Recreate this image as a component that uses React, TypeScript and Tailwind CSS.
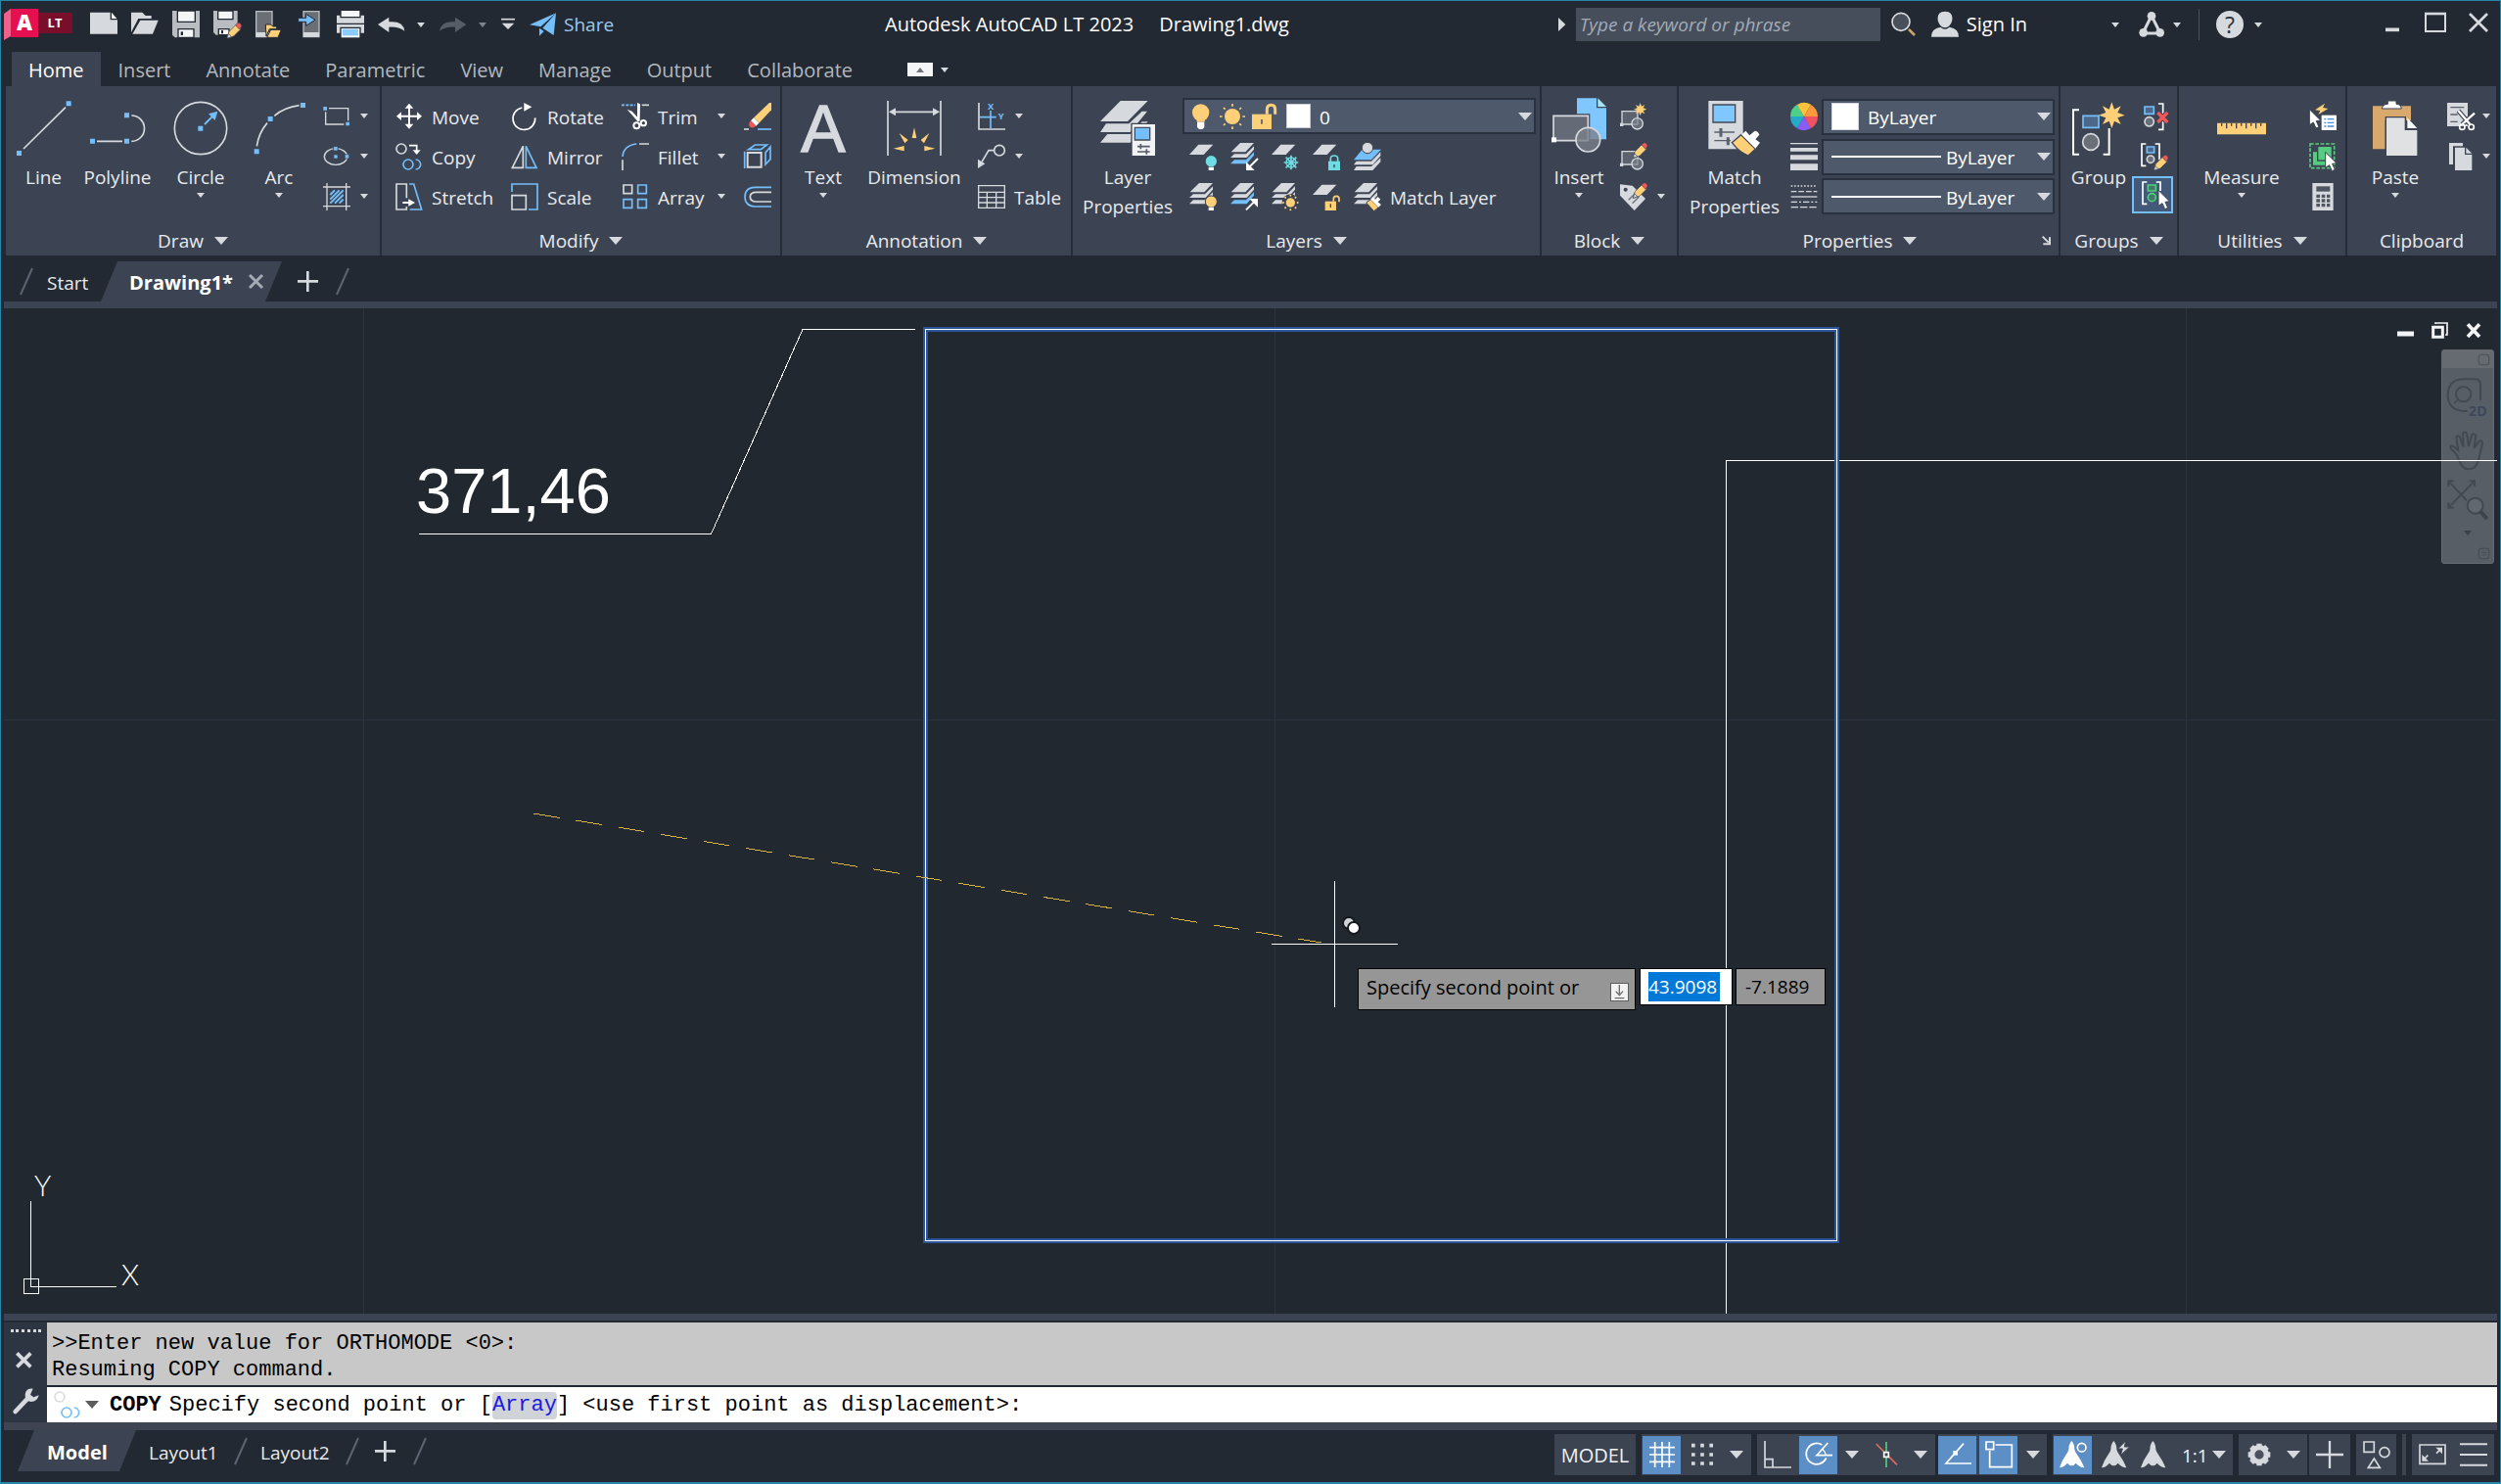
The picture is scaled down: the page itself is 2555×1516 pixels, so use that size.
import type { ReactNode } from 'react'

const LIGHT = '#d6d9dd'
const BLUE = '#74bffb'
const YELLOW = '#ffd077'
const CYAN = '#6fdbe3'
const RED = '#f0565a'
const GREEN = '#55cc80'
const PANEL = '#3c4453'

// Icons are drawn on a grid of three units per pixel
function Icon(props: { w?: number, h?: number, className?: string, children: ReactNode }) {
    const { w = 28, h = w, className = '', children } = props
    return <svg width={w} height={h} viewBox={`0 0 ${w * 3} ${h * 3}`} fill="none" aria-hidden="true" className={`shrink-0 overflow-visible ${className}`}>
        {children}
    </svg>
}

function Caret(props: { big?: boolean, fill?: string, className?: string }) {
    const { big, fill = LIGHT, className = '' } = props
    return <svg width={big ? 14 : 8} height={big ? 8 : 5} viewBox="0 0 8 5" preserveAspectRatio="none" aria-hidden="true" className={`shrink-0 ${className}`}>
        <path d="M0 0H8L4 5Z" fill={fill} />
    </svg>
}

function Slash() {
    return <svg width="14" height="29" viewBox="0 0 14 29" className="shrink-0" aria-hidden="true">
        <path d="M13 1L1 28" stroke="#5b6470" strokeWidth="2" />
    </svg>
}

function Plus() {
    return <Icon w={21}><path d="M31 0V63M0 31H63" stroke={LIGHT} strokeWidth="8" /></Icon>
}

/* ---------- shared bits of drawings ---------- */

function Pencil(props: { x: number, y: number }) {
    return <g transform={`translate(${props.x} ${props.y})`} stroke={PANEL} strokeWidth="2">
        <path d="M0 44L6 24L28 2L42 16L20 38Z" fill={YELLOW} />
        <path d="M26 4L32 -2Q36 -5 41 0Q47 6 43 10L38 17Z" fill={RED} />
        <path d="M0 44L4 30L14 40Z" fill={LIGHT} />
    </g>
}

function Pointer(props: { x: number, y: number }) {
    return <path transform={`translate(${props.x} ${props.y})`} d="M0 0L34 34L21 36L29 54L20 58L12 40L0 48Z" fill="#fff" stroke={PANEL} strokeWidth="3" />
}

function Burst(props: { x: number, y: number, s: number }) {
    return <path transform={`translate(${props.x} ${props.y}) scale(${props.s})`} fill={YELLOW}
        d="M0 -20L4 -9L14 -14L9 -4L20 0L9 4L14 14L4 9L0 20L-4 9L-14 14L-9 4L-20 0L-9 -4L-14 -14L-4 -9Z" />
}

function Sheet() {
    return <path d="M28 5H73L44 36H0Z" fill={LIGHT} />
}

function Stack(props: { last?: string }) {
    return <>
        <path d="M30 0H72L46 28H2Z" fill={LIGHT} />
        <path d="M12 34H48L72 10V20L50 45H0Z" fill={LIGHT} />
        <path d="M12 52H48L72 28V38L50 64H0Z" fill={props.last || LIGHT} />
    </>
}

function Sun(props: { x: number, y: number, r: number }) {
    const { x, y, r } = props
    return <g>
        <circle cx={x} cy={y} r={r} fill={YELLOW} />
        {[0, 45, 90, 135, 180, 225, 270, 315].map(a => <circle key={a} cx={x} cy={y - r - 8} r="3" fill={YELLOW} transform={`rotate(${a} ${x} ${y})`} />)}
    </g>
}

function BlockShape() {
    return <>
        <path d="M6 26H54V66H6Z" fill="#5c626e" stroke={LIGHT} strokeWidth="4" />
        <path d="M0 62h10v10H0Z" fill={LIGHT} />
        <circle cx="53" cy="64" r="17" fill="#7a808a" fillOpacity="0.7" stroke={LIGHT} strokeWidth="4" />
    </>
}

/* ---------- ribbon controls ---------- */

function BigButton(props: { label: string[], width: string, caret?: boolean, children: ReactNode }) {
    const { label, width, caret, children } = props
    return <button type="button" className={`${width} flex shrink-0 flex-col items-center pt-[5px]`}>
        <span className="flex h-14 items-center justify-center">{children}</span>
        <span className="mt-[7px] leading-[30px]">
            {label.map(line => <span key={line} className="block">{line}</span>)}
        </span>
        {caret && <Caret className="mt-px" />}
    </button>
}

function Row(props: { label?: string, name?: string, caret?: boolean, caretEnd?: boolean, gap?: string, children: ReactNode }) {
    const { label, name, caret, caretEnd, gap = 'ml-[10px]', children } = props
    return <button type="button" aria-label={label || name} className="flex h-[41px] items-center whitespace-nowrap">
        {children}
        {label && <span className="ml-[9px] pt-[2px]">{label}</span>}
        {caret && <Caret className={gap} />}
        {caretEnd && <Caret className="mr-[19px] ml-auto" />}
    </button>
}

function Panel(props: { title: string, width: string, noCaret?: boolean, launcher?: boolean, children: ReactNode }) {
    const { title, width, noCaret, launcher, children } = props
    return <section aria-label={title} className={`${width} relative flex flex-col border-r-2 border-[#262d38] pt-[10px] last:border-r-0`}>
        <div className="flex h-[123px]">{children}</div>
        <div className={`flex h-10 items-center justify-center gap-[11px] pt-[10px] ${launcher ? 'pr-[18px]' : ''}`}>
            <span>{title}</span>
            {!noCaret && <Caret big />}
        </div>
        {launcher && <button type="button" aria-label="Properties palette" className="absolute right-2 bottom-[11px]">
            <Icon w={9}><path d="M2 2L20 20M24 4V25H4" stroke={LIGHT} strokeWidth="6" /></Icon>
        </button>}
    </section>
}

function Select(props: { name: string, value: string, pad: string, children: ReactNode }) {
    const { name, value, pad, children } = props
    return <div className="relative h-[37px] w-full">
        <select aria-label={name} defaultValue={value} className={`h-full w-full appearance-none border-2 border-[#2a313e] bg-[#4e5a6c] pt-[2px] ${pad} text-white`}>
            <option>{value}</option>
        </select>
        <div className="pointer-events-none absolute inset-0 flex items-center">
            {children}
            <Caret big className="mr-[4px] ml-auto" />
        </div>
    </div>
}

/* ---------- title bar ---------- */

function QuickAccess() {
    return <div className="flex items-center gap-[14px]">
        <button type="button" aria-label="New"><Icon>
            <path d="M0 5H62V28H84V71H0Z" fill={LIGHT} />
            <path d="M66 5L82 24H66Z" fill="#fff" />
        </Icon></button>
        <button type="button" aria-label="Open"><Icon>
            <path d="M0 5H34L44 15H62V24H22L0 66Z" fill={LIGHT} />
            <path d="M28 29H83L66 71H4Z" fill={LIGHT} />
        </Icon></button>
        <button type="button" aria-label="Save"><Icon>
            <path d="M0 0H84V82H8L0 74Z" fill="#b9bdc2" />
            <path d="M16 0H70V34H16Z" fill="#f4f6f8" stroke="#222933" strokeWidth="4" />
            <path d="M18 56H66V82H18Z" fill="#f4f6f8" stroke="#222933" strokeWidth="4" />
            <path d="M26 64h7v11h-7Z" fill="#222933" />
        </Icon></button>
        <button type="button" aria-label="Save As"><Icon>
            <path d="M0 0H74V52L48 74H8L0 66Z" fill="#b9bdc2" />
            <path d="M14 0H60V26H14Z" fill="#f4f6f8" stroke="#222933" strokeWidth="4" />
            <path d="M16 56H48V74H16Z" fill="#f4f6f8" stroke="#222933" strokeWidth="4" />
            <path d="M24 60h6v10h-6Z" fill="#222933" />
            <Pencil x={42} y={40} />
        </Icon></button>
        <button type="button" aria-label="Open from mobile"><Icon>
            <path d="M5 2H54V80H5Z" fill="#6a6e75" stroke="#b9bdc2" strokeWidth="4" />
            <path d="M5 66H54V80H5Z" fill={LIGHT} />
            <path d="M34 42H50L56 48H68V56H46L36 78Z" fill={YELLOW} stroke="#222933" strokeWidth="3" />
            <path d="M50 58H82L72 82H38Z" fill={YELLOW} stroke="#222933" strokeWidth="3" />
        </Icon></button>
        <button type="button" aria-label="Save to mobile"><Icon>
            <path d="M24 2H72V80H24Z" fill="#6a6e75" stroke="#b9bdc2" strokeWidth="4" />
            <path d="M24 66H72V80H24Z" fill={LIGHT} />
            <path d="M8 22H32V10L60 28L32 46V34H8Z" fill={BLUE} stroke="#222933" strokeWidth="3" />
        </Icon></button>
        <button type="button" aria-label="Plot"><Icon>
            <path d="M14 0H70V18H14Z" fill="#f4f6f8" />
            <path d="M0 14H10V22H74V14H84V38H0Z" fill={LIGHT} />
            <path d="M0 42H84V68H74V50H10V68H0Z" fill={LIGHT} />
            <path d="M14 54H70V82H14Z" fill="#f4f6f8" />
            <path d="M18 56H66V76H18Z" fill="#8ccbff" />
        </Icon></button>
        <div className="flex items-center">
            <button type="button" aria-label="Undo"><Icon>
                <path d="M0 42L34 20V34Q78 30 82 62Q62 48 34 50V66Z" fill={LIGHT} />
            </Icon></button>
            <Caret className="ml-3" />
            <button type="button" aria-label="Redo" className="ml-[15px]"><Icon>
                <path d="M82 42L48 20V34Q6 30 0 62Q20 48 48 50V66Z" fill="#565d67" />
            </Icon></button>
            <Caret className="ml-3" fill="#7d838c" />
            <button type="button" aria-label="Customize Quick Access Toolbar" className="ml-[15px]">
                <Icon w={14}><path d="M0 5H42" stroke={LIGHT} strokeWidth="5" /><path d="M2 17H40L21 36Z" fill={LIGHT} /></Icon>
            </button>
            <button type="button" className="ml-[15px] flex items-center text-[19px] text-[#9cc9ee]">
                <Icon w={27}>
                    <path d="M0 40L81 4L34 46Z" fill={BLUE} />
                    <path d="M81 4L40 50L74 72Z" fill={BLUE} />
                    <path d="M30 50V74L44 60Z" fill={BLUE} />
                </Icon>
                <span className="ml-2">Share</span>
            </button>
        </div>
    </div>
}

function TitleBar() {
    return <header className="flex h-[52px] items-start text-[20px]">
        <div className="flex h-[48px] w-[903px] shrink-0 items-center pl-[3px]">
            <svg width="70" height="32" viewBox="0 0 70 32" className="mr-[18px] shrink-0 overflow-visible" aria-label="AutoCAD LT">
                <path d="M0 5L7 0V28L0 32Z" fill="#f0608a" />
                <path d="M7 0H35V29H7Z" fill="#e51050" />
                <path d="M35 4H70V25H35Z" fill="#790e2b" />
                <text x="21" y="22" textAnchor="middle" fontSize="22" fontWeight="800" fill="#fff">A</text>
                <text x="52" y="19" textAnchor="middle" fontSize="13" fontWeight="700" fill="#fff">LT</text>
            </svg>
            <QuickAccess />
        </div>
        <div className="flex h-[48px] shrink-0 items-center gap-[26px] text-white">
            <span>Autodesk AutoCAD LT 2023</span>
            <span>Drawing1.dwg</span>
        </div>
        <div className="flex h-[48px] flex-1 items-center justify-end">
            <Icon w={8} h={14}><path d="M0 0L22 21L0 42Z" fill={LIGHT} /></Icon>
            <input type="text" aria-label="Search help" placeholder="Type a keyword or phrase" className="ml-[10px] h-[34px] w-[311px] bg-[#464e5c] pl-1 text-[19px] italic placeholder:text-[#a3abb8]" />
            <button type="button" aria-label="Search" className="ml-[11px]"><Icon w={26}>
                <path d="M54 54L72 72" stroke="#c9a26c" strokeWidth="8" />
                <circle cx="30" cy="31" r="27" fill="#4a505a" stroke={LIGHT} strokeWidth="5" />
            </Icon></button>
            <button type="button" className="ml-[15px] flex items-center text-white">
                <Icon>
                    <path d="M42 2C58 2 66 12 64 28C62 42 52 52 42 52C32 52 22 42 20 28C18 12 26 2 42 2Z" fill={LIGHT} />
                    <path d="M0 80Q0 54 28 50Q42 62 56 50Q84 54 84 80Z" fill={LIGHT} />
                </Icon>
                <span className="ml-2">Sign In</span>
            </button>
            <Caret className="ml-[86px]" />
            <button type="button" aria-label="Autodesk App Store" className="ml-5"><Icon w={26}>
                <path d="M39 12L12 66H66Z" stroke={LIGHT} strokeWidth="9" />
                <circle cx="39" cy="13" r="13" fill={LIGHT} />
                <circle cx="14" cy="64" r="13" fill={LIGHT} />
                <circle cx="65" cy="64" r="13" fill={LIGHT} />
            </Icon></button>
            <Caret className="ml-[9px]" />
            <span className="ml-[18px] h-8 w-px bg-[#4a525e]" />
            <button type="button" aria-label="Help" className="ml-[17px] flex size-7 items-center justify-center rounded-full bg-[#d6d9dd] text-[23px] leading-none text-[#2b323c]">?</button>
            <Caret className="ml-[11px]" />
            <button type="button" aria-label="Minimize" className="ml-[126px]"><Icon w={14}><path d="M0 37H42" stroke={LIGHT} strokeWidth="11" /></Icon></button>
            <button type="button" aria-label="Maximize" className="ml-[26px] -mt-1"><Icon w={22}><path d="M3 6H63V60H3Z" stroke={LIGHT} strokeWidth="6" /><path d="M0 6H66" stroke={LIGHT} strokeWidth="8" /></Icon></button>
            <button type="button" aria-label="Close" className="mr-3 ml-[23px] -mt-1"><Icon w={20}><path d="M3 3L57 57M57 3L3 57" stroke={LIGHT} strokeWidth="8" /></Icon></button>
        </div>
    </header>
}

function RibbonTabs() {
    const tabs = ['Insert', 'Annotate', 'Parametric', 'View', 'Manage', 'Output', 'Collaborate']
    return <nav className="flex h-[35px] items-stretch pl-[11px] text-[20px] text-[#b3b8be]">
        <button type="button" className="bg-[#3c4453] px-[17px] pt-[2px] text-white">Home</button>
        {tabs.map(tab => <button type="button" key={tab} className="px-[18px] pt-[2px]">{tab}</button>)}
        <button type="button" aria-label="Minimize ribbon" className="ml-[38px] flex items-center pt-px">
            <span className="flex h-[14px] w-[26px] items-center justify-center bg-[#f4f5f7]">
                <Caret fill="#6f747b" className="rotate-180" />
            </span>
            <Caret className="ml-2" />
        </button>
    </nav>
}

/* ---------- ribbon panels ---------- */

function DrawPanel() {
    return <Panel title="Draw" width="w-[384px]">
        <BigButton label={['Line']} width="w-[77px]">
            <Icon w={56}>
                <path d="M21 147L150 20" stroke={LIGHT} strokeWidth="5" />
                <path d="M0 153h15v15H0ZM152 1h15v15h-15Z" fill={BLUE} />
            </Icon>
        </BigButton>
        <BigButton label={['Polyline']} width="w-[74px]">
            <Icon w={56}>
                <path d="M21 124H99M127 45A39 39 0 0 1 127 124" stroke={LIGHT} strokeWidth="5" />
                <path d="M0 116h15v15H0ZM105 116h15v15h-15ZM105 37h15v15h-15Z" fill={BLUE} />
            </Icon>
        </BigButton>
        <BigButton label={['Circle']} width="w-24" caret>
            <Icon w={56}>
                <circle cx="84" cy="84" r="80" stroke={LIGHT} strokeWidth="5" />
                <path d="M96 72L124 44" stroke={BLUE} strokeWidth="6" />
                <path d="M76 77h15v15H76ZM136 32L108 40L128 60Z" fill={BLUE} />
            </Icon>
        </BigButton>
        <BigButton label={['Arc']} width="w-16" caret>
            <Icon w={56}>
                <path d="M16 139Q22 98 48 68M70 46Q100 20 146 14" stroke={LIGHT} strokeWidth="5" />
                <path d="M8 148h15v15H8ZM50 48h15v15H50ZM150 6h15v15h-15Z" fill={BLUE} />
            </Icon>
        </BigButton>
        <div className="ml-[13px]">
            <Row name="Rectangle" caret><Icon>
                <path d="M18 17H77V55M8 28V66H64" stroke={LIGHT} strokeWidth="4" />
                <path d="M1 12h11v11H1ZM70 59h11v11H70Z" fill={BLUE} />
            </Icon></Row>
            <Row name="Ellipse" caret><Icon>
                <ellipse cx="39" cy="42" rx="35" ry="25" stroke={LIGHT} strokeWidth="4" />
                <path d="M32 11h13v13H32ZM67 35h13v13H67Z" fill={BLUE} stroke={PANEL} strokeWidth="2" />
                <path d="M34 37h10v10H34Z" fill={BLUE} />
            </Icon></Row>
            <Row name="Hatch" caret><Icon>
                <path d="M0 12H84M0 71H84M12 0V84M71 0V84" stroke={LIGHT} strokeWidth="4" />
                <path d="M22 36L36 22M22 50L50 22M22 62L62 22M36 62L62 36M50 62L62 50" stroke={BLUE} strokeWidth="6" />
            </Icon></Row>
        </div>
    </Panel>
}

function ModifyPanel() {
    return <Panel title="Modify" width="w-[409px]">
        <div className="ml-[14px] flex w-[118px] flex-col">
            <Row label="Move"><Icon>
                <path d="M42 12V70M14 41H70" stroke="#fff" strokeWidth="6" />
                <path d="M42 2L55 17H29ZM42 80L55 65H29ZM3 41L18 28V54ZM81 41L66 28V54Z" fill="#fff" />
            </Icon></Row>
            <Row label="Copy"><Icon>
                <circle cx="18" cy="18" r="15" stroke={LIGHT} strokeWidth="5" />
                <path d="M42 8H65V24" stroke="#fff" strokeWidth="5" />
                <path d="M53 22H77L65 36Z" fill="#fff" />
                <circle cx="39" cy="66" r="15" stroke={BLUE} strokeWidth="5" />
                <path d="M62 51A15 15 0 1 1 62 81" stroke={BLUE} strokeWidth="5" />
            </Icon></Row>
            <Row label="Stretch"><Icon>
                <path d="M34 46V3H3V81H34V72" stroke={LIGHT} strokeWidth="5" />
                <path d="M22 60H44" stroke="#fff" strokeWidth="6" />
                <path d="M40 49L60 60L40 71Z" fill="#fff" />
                <path d="M42 3H56L80 81H44" stroke={BLUE} strokeWidth="5" />
            </Icon></Row>
        </div>
        <div className="flex w-[113px] flex-col">
            <Row label="Rotate"><Icon>
                <path d="M34 15A34 34 0 1 0 74 46" stroke="#fff" strokeWidth="5" />
                <path d="M40 0L64 13L40 26Z" fill="#fff" />
            </Icon></Row>
            <Row label="Mirror"><Icon>
                <path d="M37 10V76H4Z" stroke={LIGHT} strokeWidth="5" />
                <path d="M46 10V76H78Z" stroke={BLUE} strokeWidth="5" />
            </Icon></Row>
            <Row label="Scale"><Icon>
                <path d="M3 27V3H81V81H54" stroke={BLUE} strokeWidth="5" />
                <path d="M3 38H46V81H3Z" stroke={LIGHT} strokeWidth="5" />
            </Icon></Row>
        </div>
        <div className="flex w-[125px] flex-col">
            <Row label="Trim" caretEnd><Icon>
                <path d="M0 7H42" stroke={BLUE} strokeWidth="5" strokeDasharray="9 4" />
                <path d="M62 7H84" stroke={LIGHT} strokeWidth="5" />
                <path d="M48 0L57 4L56 50L48 52ZM17 20L32 26L58 54L50 58Z" fill="#fff" />
                <circle cx="46" cy="70" r="9" stroke="#fff" strokeWidth="6" />
                <circle cx="67" cy="62" r="8" stroke="#fff" strokeWidth="6" />
            </Icon></Row>
            <Row label="Fillet" caretEnd><Icon>
                <path d="M3 42Q6 8 46 3" stroke={BLUE} strokeWidth="5" />
                <path d="M54 3H84M3 52V84" stroke={LIGHT} strokeWidth="5" />
            </Icon></Row>
            <Row label="Array" caretEnd><Icon>
                <path d="M6 6H32V32H6Z" stroke={LIGHT} strokeWidth="5" />
                <path d="M50 6H76V32H50ZM6 50H32V76H6ZM50 50H76V76H50Z" stroke={BLUE} strokeWidth="5" />
            </Icon></Row>
        </div>
        <div>
            <Row name="Erase"><Icon>
                <path d="M78 0H84V22L46 62L30 46Z" fill={YELLOW} />
                <path d="M30 46L46 62L37 71L21 55Z" fill="#fff" />
                <path d="M21 55L37 71Q28 80 19 74Q11 66 21 55Z" fill={RED} />
                <path d="M0 81H15" stroke={LIGHT} strokeWidth="5" />
                <path d="M42 81H84" stroke={BLUE} strokeWidth="5" />
            </Icon></Row>
            <Row name="Explode"><Icon>
                <path d="M11 30H53V74H11Z" stroke={LIGHT} strokeWidth="6" />
                <path d="M14 20L34 6H70L52 20ZM66 30L81 12V50L66 66ZM2 26V78" stroke={BLUE} strokeWidth="5" />
            </Icon></Row>
            <Row name="Offset"><Icon>
                <path d="M84 13H34Q3 14 3 42Q3 70 34 72H84" stroke={BLUE} strokeWidth="5" />
                <path d="M84 28H38Q19 28 19 42Q19 57 38 57H84" stroke={LIGHT} strokeWidth="5" />
            </Icon></Row>
        </div>
    </Panel>
}

function AnnotationPanel() {
    return <Panel title="Annotation" width="w-[297px]">
        <BigButton label={['Text']} width="w-[84px]" caret>
            <Icon w={56}>
                <text x="84" y="157" fontSize="204" textAnchor="middle" fill={LIGHT} stroke={LIGHT} strokeWidth="4" className="font-['Liberation_Sans']">A</text>
            </Icon>
        </BigButton>
        <BigButton label={['Dimension']} width="w-[102px]">
            <Icon w={56}>
                <path d="M3 0V168M165 0V168M20 34H148" stroke={LIGHT} strokeWidth="5" />
                <path d="M6 34L27 22V46ZM162 34L141 22V46Z" fill={LIGHT} />
                <path d="M84 82L91 114H77ZM38 99L65 120L55 130ZM130 99L114 130L104 120ZM20 146L53 138V154ZM148 146L115 138V154Z" fill={YELLOW} />
            </Icon>
        </BigButton>
        <div className="ml-[14px]">
            <Row name="Linear" caret><Icon>
                <path d="M3 0V81H84" stroke={LIGHT} strokeWidth="5" />
                <path d="M6 44H56M39 24V78" stroke={BLUE} strokeWidth="5" />
                <text x="39" y="20" fontSize="28" fontWeight="700" textAnchor="middle" fill={BLUE}>X</text>
                <text x="71" y="50" fontSize="28" fontWeight="700" textAnchor="middle" fill={BLUE}>Y</text>
            </Icon></Row>
            <Row name="Leader" caret><Icon>
                <circle cx="66" cy="23" r="16" stroke={LIGHT} strokeWidth="5" />
                <path d="M48 23H33L12 58" stroke={LIGHT} strokeWidth="5" />
                <path d="M0 50L22 64L0 78Z" fill={LIGHT} />
            </Icon></Row>
            <Row label="Table"><Icon>
                <path d="M2 8H82V76H2ZM2 28H82M2 44H82M2 60H82M28 28V76M56 28V76" stroke={LIGHT} strokeWidth="4" />
            </Icon></Row>
        </div>
    </Panel>
}

function LayersPanel() {
    return <Panel title="Layers" width="w-[479px]">
        <BigButton label={['Layer', 'Properties']} width="w-28">
            <Icon w={56}>
                <path d="M62 0H146L84 63H0Z" fill={LIGHT} />
                <path d="M18 70H88L128 32H144L92 96H0Z" fill={LIGHT} />
                <path d="M22 102H92L128 64H146L92 128H0Z" fill={LIGHT} />
                <path d="M96 70H170V170H96Z" fill="#f2f3f5" stroke={PANEL} strokeWidth="4" />
                <path d="M106 82H152V120H106Z" fill={BLUE} stroke="#444c58" strokeWidth="4" />
                <path d="M114 140H152M124 132V148M114 156H152M142 148V164" stroke="#555c66" strokeWidth="5" />
            </Icon>
        </BigButton>
        <div className="mr-1 flex-1">
            <div className="flex h-[41px] items-center">
                <Select name="Layer" value="0" pad="pl-[138px]">
                    <Icon w={26} className="ml-[5px]">
                        <circle cx="41" cy="27" r="26" fill={YELLOW} />
                        <path d="M29 46H53V56H29Z" fill={YELLOW} />
                        <path d="M30 56H52V72L46 78H36L30 72Z" fill="#fff" />
                    </Icon>
                    <Icon w={26} className="ml-[7px]">
                        <circle cx="39" cy="39" r="24" fill={YELLOW} />
                        <path d="M39 0V8M39 70V78M0 39H8M70 39H78M12 12L17 17M61 61L66 66M66 12L61 17M12 66L17 61" stroke={YELLOW} strokeWidth="5" />
                    </Icon>
                    <Icon w={26} className="ml-[7px]">
                        <path d="M0 32H60V78H0Z" fill={YELLOW} />
                        <path d="M46 32V18Q46 4 59 4Q71 4 71 18V32" stroke={YELLOW} strokeWidth="9" />
                        <path d="M30 48V62" stroke="#4e5a6c" strokeWidth="5" />
                    </Icon>
                    <span className="ml-[9px] size-[25px] border border-[#c8ccd2] bg-white" />
                </Select>
            </div>
            <div className="flex gap-[14px] pl-[7px]">
                <Row name="Off"><Icon>
                    <Sheet /><circle cx="67" cy="56" r="17" fill={CYAN} /><path d="M59 74H75V84H59Z" fill="#fff" />
                </Icon></Row>
                <Row name="Isolate"><Icon>
                    <Stack last={BLUE} /><path d="M84 50L58 76" stroke={PANEL} strokeWidth="14" />
                    <path d="M84 48L58 74" stroke="#fff" strokeWidth="6" /><path d="M48 84V58L74 84Z" fill="#fff" />
                </Icon></Row>
                <Row name="Freeze"><Icon>
                    <Sheet />
                    <path d="M60 38V82M38 60H82M44 44L76 76M76 44L44 76" stroke={CYAN} strokeWidth="5" />
                    <circle cx="60" cy="60" r="15" stroke={CYAN} strokeWidth="4" />
                </Icon></Row>
                <Row name="Lock"><Icon>
                    <Sheet /><path d="M48 56H84V84H48Z" fill={CYAN} />
                    <path d="M55 58V48Q55 39 66 39Q77 39 77 48V58" stroke={CYAN} strokeWidth="5" /><path d="M66 66V76" stroke={PANEL} strokeWidth="4" />
                </Icon></Row>
                <Row name="Make Current"><Icon>
                    <path d="M26 20H84L54 52H0Z" fill={BLUE} />
                    <circle cx="42" cy="15" r="17" fill={LIGHT} stroke={PANEL} strokeWidth="3" />
                    <path d="M8 56H54L82 28V40L58 67H0ZM8 72H54L82 46V58L58 84H0Z" fill={LIGHT} />
                </Icon></Row>
            </div>
            <div className="flex gap-[14px] pl-[7px]">
                <Row name="Turn All On"><Icon>
                    <Stack /><circle cx="67" cy="57" r="18" fill={YELLOW} stroke={PANEL} strokeWidth="3" /><path d="M59 74H75V84H59Z" fill="#fff" />
                </Icon></Row>
                <Row name="Unisolate"><Icon>
                    <Stack last={BLUE} /><path d="M48 84L74 58" stroke={PANEL} strokeWidth="14" />
                    <path d="M48 82L72 58" stroke="#fff" strokeWidth="6" /><path d="M84 48V74L58 48Z" fill="#fff" />
                </Icon></Row>
                <Row name="Thaw All"><Icon>
                    <Stack /><circle cx="58" cy="60" r="26" fill={PANEL} /><Sun x={58} y={60} r={14} />
                </Icon></Row>
                <Row name="Unlock"><Icon>
                    <Sheet /><path d="M38 56H72V84H38Z" fill={YELLOW} />
                    <path d="M64 56V48Q64 40 73 40Q81 40 81 48V58" stroke={YELLOW} strokeWidth="5" /><path d="M55 64V75" stroke={PANEL} strokeWidth="4" />
                </Icon></Row>
                <Row label="Match Layer"><Icon>
                    <Stack />
                    <path d="M38 60L52 50L76 74L62 86Z" fill={YELLOW} stroke={PANEL} strokeWidth="3" />
                    <path d="M52 50L60 44L66 50L74 42L82 50L74 58L84 66L76 74Z" fill="#fff" />
                </Icon></Row>
            </div>
        </div>
    </Panel>
}

function BlockPanel() {
    return <Panel title="Block" width="w-[140px]">
        <BigButton label={['Insert']} width="w-[76px]" caret>
            <Icon w={56}>
                <path d="M78 -8H138V22H168V118H78Z" fill="#80c6ff" />
                <path d="M142 -8L168 18H142Z" fill="#a6e6f4" />
                <path d="M6 46H112V122H6Z" fill="#646a76" stroke={PANEL} strokeWidth="12" />
                <path d="M6 46H112V122H6Z" fill="#646a76" stroke={LIGHT} strokeWidth="5" />
                <path d="M0 112h15v15H0Z" fill="#fff" />
                <circle cx="112" cy="119" r="37" fill="#7b818b" fillOpacity="0.8" stroke={LIGHT} strokeWidth="5" />
            </Icon>
        </BigButton>
        <div className="ml-1">
            <Row name="Create Block"><Icon><BlockShape /><Burst x={62} y={20} s={1} /></Icon></Row>
            <Row name="Block Editor"><Icon><BlockShape /><Pencil x={40} y={2} /></Icon></Row>
            <Row name="Edit Attributes" caret><Icon>
                <path d="M0 4L38 8L78 48L44 84L0 38Z" fill={LIGHT} />
                <circle cx="17" cy="20" r="6" fill={PANEL} />
                <path d="M26 52L46 32M38 62L58 42" stroke="#6b717b" strokeWidth="4" />
                <Pencil x={40} y={2} />
            </Icon></Row>
        </div>
    </Panel>
}

function ColorWheel() {
    const colors = ['#ff9a3c', '#f0525f', '#8a5cf5', '#27a9c9', '#4fd08a', '#ffc23d']
    return <Icon>
        {colors.map((color, index) => <path key={color} d="M42 42L42 0A42 42 0 0 1 78.4 21Z" fill={color} transform={`rotate(${30 + index * 60} 42 42)`} />)}
    </Icon>
}

function PropertiesPanel() {
    return <Panel title="Properties" width="w-[390px]" launcher>
        <BigButton label={['Match', 'Properties']} width="w-[114px]">
            <Icon w={56}>
                <path d="M4 0H110V148H4Z" fill={LIGHT} />
                <path d="M18 12H86V66H18Z" fill="#80c6ff" stroke="#3f4855" strokeWidth="4" />
                <path d="M22 96H84M22 122H72" stroke="#5a616b" strokeWidth="4" />
                <path d="M42 84V110M64 112V136" stroke="#5a616b" strokeWidth="9" />
                <path d="M76 128L104 104L148 148L126 168Q96 156 76 128Z" fill={YELLOW} stroke={PANEL} strokeWidth="4" />
                <path d="M106 104L118 92L130 106L146 92Q156 92 160 104L148 118L162 128L148 146Z" fill="#fff" />
            </Icon>
        </BigButton>
        <div className="flex flex-col">
            <div className="flex h-[41px] items-center"><ColorWheel /></div>
            <div className="flex h-[41px] items-center"><Icon>
                <path d="M0 0H84V4H0ZM0 15H84V26H0ZM0 37H84V52H0ZM0 64H84V84H0Z" fill={LIGHT} />
            </Icon></div>
            <div className="flex h-[41px] items-center"><Icon>
                <g stroke={LIGHT} strokeWidth="4">
                    <path d="M2 9H82" strokeDasharray="5 5" />
                    <path d="M2 26H82" strokeDasharray="17 6" />
                    <path d="M2 42H82" />
                    <path d="M2 58H82" strokeDasharray="19 6 6 6" />
                    <path d="M2 74H82" strokeDasharray="22 6" />
                </g>
            </Icon></div>
        </div>
        <div className="mr-1 ml-1 flex flex-1 flex-col pt-px">
            <div className="flex h-[41px] items-center">
                <Select name="Object color" value="ByLayer" pad="pl-[45px]">
                    <span className="ml-[10px] size-7 border border-[#d4d7dc] bg-white" />
                </Select>
            </div>
            <div className="flex h-[41px] items-center">
                <Select name="Lineweight" value="ByLayer" pad="pl-[125px]">
                    <span className="ml-[10px] h-[2px] w-28 bg-white" />
                </Select>
            </div>
            <div className="flex h-[41px] items-center">
                <Select name="Linetype" value="ByLayer" pad="pl-[125px]">
                    <span className="ml-[10px] h-[2px] w-28 bg-white" />
                </Select>
            </div>
        </div>
    </Panel>
}

function GroupsPanel() {
    return <Panel title="Groups" width="w-[121px]">
        <BigButton label={['Group']} width="ml-[5px] w-[68px]">
            <Icon w={56}>
                <path d="M24 28H6V164H24M98 164H116V84" stroke="#fff" strokeWidth="6" />
                <path d="M36 46H84V82H36Z" fill="#4d6788" stroke={BLUE} strokeWidth="5" />
                <circle cx="60" cy="126" r="25" fill="#6a6f78" stroke={LIGHT} strokeWidth="5" />
                <circle cx="124" cy="44" r="30" fill={PANEL} />
                <Burst x={124} y={44} s={2} />
            </Icon>
        </BigButton>
        <div className="flex flex-col">
            <button type="button" aria-label="Ungroup" className="flex h-[41px] w-[42px] items-center justify-center pl-[3px]"><Icon>
                <path d="M54 3H68V82H54" stroke="#fff" strokeWidth="5" />
                <path d="M12 12H40V34H12Z" fill="#4d6788" stroke={BLUE} strokeWidth="5" />
                <circle cx="26" cy="58" r="14" fill="#6a6f78" stroke={LIGHT} strokeWidth="5" />
                <path d="M52 30L82 60M82 30L52 60" stroke={PANEL} strokeWidth="16" />
                <path d="M52 30L82 60M82 30L52 60" stroke={RED} strokeWidth="10" />
            </Icon></button>
            <button type="button" aria-label="Group Edit" className="flex h-[41px] w-[42px] items-center justify-center pl-[3px]"><Icon>
                <path d="M16 3H3V70H16M44 3H57V52" stroke="#fff" strokeWidth="5" />
                <path d="M19 12H41V30H19Z" fill="#4d6788" stroke={BLUE} strokeWidth="5" />
                <circle cx="30" cy="50" r="11" fill="#6a6f78" stroke={LIGHT} strokeWidth="5" />
                <Pencil x={40} y={40} />
            </Icon></button>
            <button type="button" aria-label="Group Selection" className="flex h-[38px] w-[42px] items-center justify-center border-2 border-[#74bffb] bg-[#43597a] pl-[3px]"><Icon>
                <path d="M19 3H6V70H19M47 3H60V30" stroke="#fff" strokeWidth="5" />
                <path d="M22 12H46V30H22Z" fill="#3f7a68" stroke={GREEN} strokeWidth="5" />
                <circle cx="34" cy="50" r="12" fill="#3f7a68" stroke={GREEN} strokeWidth="5" />
                <Pointer x={54} y={28} />
            </Icon></button>
        </div>
    </Panel>
}

function UtilitiesPanel() {
    return <Panel title="Utilities" width="w-[172px]">
        <BigButton label={['Measure']} width="w-32" caret>
            <Icon w={50} h={14}>
                <path d="M0 5H150V40H0Z" fill={YELLOW} />
                <path d="M14 5V14M29 5V22M44 5V14M59 5V22M74 5V14M89 5V22M104 5V14M119 5V22M134 5V14" stroke={PANEL} strokeWidth="4" />
            </Icon>
        </BigButton>
        <div className="ml-[5px]">
            <Row name="Quick Select"><Icon>
                <path d="M48 2L18 22L34 24L28 36L58 18L42 15Z" fill={YELLOW} />
                <Pointer x={1} y={20} />
                <path d="M38 38H84V84H38Z" fill="#fff" />
                <path d="M46 50h6M46 61h6M46 72h6M56 50h20M56 61h20M56 72h20" stroke="#3f8fdc" strokeWidth="4" />
            </Icon></Row>
            <Row name="Select All"><Icon>
                <path d="M3 3H77V77H3Z" stroke={GREEN} strokeWidth="5" strokeDasharray="11 5" />
                <path d="M28 12H68V52H28Z" fill={GREEN} />
                <path d="M12 28H24V56H52V68H12Z" fill={GREEN} />
                <Pointer x={50} y={28} />
            </Icon></Row>
            <Row name="Quick Calculator"><Icon>
                <path d="M10 0H74V84H10Z" fill={LIGHT} />
                <path d="M22 10H64V26H22Z" fill="#4f5661" />
                <path d="M22 40h42M22 54h42M22 68h42" stroke="#4f5661" strokeWidth="10" strokeDasharray="11 5" />
            </Icon></Row>
        </div>
    </Panel>
}

function ClipboardPanel() {
    return <Panel title="Clipboard" width="flex-1" noCaret>
        <BigButton label={['Paste']} width="w-[98px]" caret>
            <Icon w={46} h={56}>
                <path d="M0 16H117V60H38V148H0Z" fill="#d9a86c" />
                <path d="M28 24Q30 10 46 10V0H72V10Q86 10 88 24Z" fill="#fff" stroke={PANEL} strokeWidth="3" />
                <path d="M40 50H100V88H138V170H40Z" fill="#dfe1e3" stroke={PANEL} strokeWidth="4" />
                <path d="M106 52L136 84H106Z" fill="#f5f6f7" />
            </Icon>
        </BigButton>
        <div className="ml-1">
            <Row name="Cut" caret gap="ml-2"><Icon>
                <path d="M0 0H63V72H0Z" fill={LIGHT} />
                <path d="M10 14H52M10 36H32M10 58H32" stroke="#5a616b" strokeWidth="4" />
                <path d="M34 24L70 66M84 32L46 66" stroke={PANEL} strokeWidth="14" />
                <path d="M34 24L70 66M84 32L46 66" stroke="#fff" strokeWidth="7" />
                <circle cx="46" cy="74" r="8" stroke="#fff" strokeWidth="5" /><circle cx="74" cy="74" r="8" stroke="#fff" strokeWidth="5" />
            </Icon></Row>
            <Row name="Copy Clip" caret gap="ml-2"><Icon>
                <path d="M6 0H48V10H18V66H6Z" fill={LIGHT} />
                <path d="M24 14H54V36H76V84H24Z" fill={LIGHT} />
                <path d="M58 14L76 32H58Z" fill={LIGHT} />
            </Icon></Row>
        </div>
    </Panel>
}

/* ---------- document tabs ---------- */

function DocumentTabs() {
    return <div className="flex h-[47px] items-end pl-[19px]">
        <div className="flex h-[41px] items-center">
            <Slash />
            <button type="button" className="ml-[14px] w-[55px] pt-[3px] text-left">Start</button>
            <div className="flex h-full w-[185px] items-center bg-[#3c4453] pl-[29px] [clip-path:polygon(17px_0,100%_0,calc(100%-17px)_100%,0_100%)]">
                <button type="button" className="pt-[3px] text-[20px] font-bold text-white">Drawing1*</button>
                <button type="button" aria-label="Close Drawing1" className="ml-[16px]"><Icon w={15}><path d="M3 3L42 42M42 3L3 42" stroke="#a6abb3" strokeWidth="9" /></Icon></button>
            </div>
            <button type="button" aria-label="New drawing" className="mr-[18px] ml-4"><Plus /></button>
            <Slash />
        </div>
    </div>
}

/* ---------- drawing area ---------- */

function Drawing() {
    return <svg className="pointer-events-none absolute inset-0 h-full w-full" aria-hidden="true" shapeRendering="crispEdges">
        <path d="M367.5 0V1100M1298.5 0V1100M2229.5 0V1100M0 420.5H2600" stroke="#2b343e" />
        <g fill="none" stroke="#fff">
            <path d="M2600 155.5H1759.5V1100" />
            <path d="M931 21.5H816L722.5 230.5H424" />
        </g>
        <path d="M941.5 21.5H1872.5V952.5H941.5Z" fill="none" stroke="#2d5599" strokeWidth="5" />
        <path d="M941.5 21.5H1872.5V952.5H941.5Z" fill="none" stroke="#fff" />
        <path d="M541 516L1346 648" stroke="#d8b23e" strokeDasharray="27 17" />
        <path d="M1359.5 585V714M1295 649.5H1424" stroke="#fff" />
        <g shapeRendering="auto" stroke="#15191e" strokeWidth="2">
            <circle cx="1374" cy="628" r="6" fill="#cfd2d6" />
            <circle cx="1379" cy="633" r="6" fill="#fff" />
        </g>
    </svg>
}

function NavBar() {
    return <div className="absolute top-[42px] right-[3px] flex h-[219px] w-[54px] flex-col items-center rounded-[3px] border border-[#666b72] bg-[#585e66] text-[#3e444c]">
        <div className="flex h-[18px] w-full items-center justify-end bg-[#666a71] pr-[3px]">
            <Icon w={13}><rect x="4" y="4" width="31" height="31" rx="8" stroke="#50565e" strokeWidth="4" /></Icon>
        </div>
        <button type="button" aria-label="Steering wheel" className="mt-[10px]">
            <Icon w={42} h={42}>
                <path d="M50 102Q2 98 2 52Q4 4 50 4H84Q102 4 102 22V70M50 102H62" stroke="#434950" strokeWidth="6" />
                <circle cx="50" cy="50" r="23" stroke="#434950" strokeWidth="6" />
                <path d="M34 66L22 78" stroke="#434950" strokeWidth="5" />
                <text x="94" y="116" fontSize="44" fontWeight="700" textAnchor="middle" fill="#3c495c">2D</text>
            </Icon>
        </button>
        <button type="button" aria-label="Pan" className="mt-3">
            <Icon w={42} h={42}>
                <path d="M30 74L12 56Q6 46 16 46L34 60L28 22Q28 12 38 18L50 50L48 10Q52 0 60 8L66 48L76 12Q84 6 88 16L82 54L98 32Q108 28 108 40L96 90Q90 118 64 118Q44 118 30 74Z" stroke="#434950" strokeWidth="6" />
            </Icon>
        </button>
        <button type="button" aria-label="Zoom extents" className="mt-2">
            <Icon w={42} h={42}>
                <path d="M4 4L60 64M84 4L4 86M4 20V4H20M68 4H84V20M4 70V86H20" stroke="#434950" strokeWidth="6" />
                <circle cx="86" cy="80" r="24" fill="#626870" stroke="#434950" strokeWidth="6" />
                <path d="M102 98L122 120" stroke="#3e444c" strokeWidth="12" />
            </Icon>
        </button>
        <Caret className="mt-[10px]" fill="#3a4048" />
        <Icon w={13} className="mt-auto mr-[3px] mb-[3px] self-end"><rect x="4" y="4" width="31" height="31" rx="8" stroke="#484e56" strokeWidth="4" /><path d="M12 16H28M12 24H28" stroke="#484e56" strokeWidth="3" /></Icon>
    </div>
}

function UcsIcon() {
    return <div className="absolute bottom-[18px] left-5 h-[124px] w-[124px]" aria-label="UCS icon">
        <svg width="124" height="124" className="absolute inset-0" shapeRendering="crispEdges" fill="none" stroke="#fff">
            <path d="M7.500 27V114.500H95M.5 106.500H15.500V121.500H.5Z" />
        </svg>
        <span className="absolute -top-1 left-[11px] font-['Lato'] text-[29px] leading-[30px] font-light text-white">Y</span>
        <span className="absolute top-[87px] left-[100px] font-['Lato'] text-[29px] leading-[30px] font-light text-white">X</span>
    </div>
}

function DynamicInput() {
    return <div className="absolute top-[674px] left-[1383px] flex items-start text-black">
        <div className="flex h-[43px] w-[284px] items-center border border-black bg-[#969696] pl-2 text-[20px]">
            <span className="-mt-1">Specify second point or</span>
            <button type="button" aria-label="Options" className="mt-[6px] mr-[6px] ml-auto flex size-[19px] items-center justify-center border border-[#5c5c5c] bg-[#f2f2f2]">
                <Icon w={13} h={15}><path d="M19 0V28M8 20L19 32L30 20M5 41H34" stroke="#6c6c6c" strokeWidth="4" /></Icon>
            </button>
        </div>
        <div className="ml-1 flex h-[38px] w-[95px] items-center border border-black bg-white pl-2">
            <input type="text" aria-label="X coordinate" defaultValue="43.9098" className="h-[30px] w-[73px] bg-[#0078d7] text-white" />
        </div>
        <input type="text" aria-label="Y coordinate" defaultValue="-7.1889" className="ml-[3px] h-[38px] w-[92px] border border-black bg-[#969696] pl-[9px]" />
    </div>
}

function Canvas() {
    return <main className="relative min-h-0 flex-1 overflow-hidden bg-[#212830]">
        <NavBar />
        <Drawing />
        <div className="absolute top-[14px] right-4 flex items-center gap-[18px]">
            <button type="button" aria-label="Minimize drawing"><Icon w={17}><path d="M0 36H51" stroke="#f2f4f6" strokeWidth="15" /></Icon></button>
            <button type="button" aria-label="Restore drawing"><Icon w={17}>
                <path d="M12 6V3H48V39H42" stroke="#f2f4f6" strokeWidth="5" />
                <path d="M5 16H34V46H5Z" stroke="#f2f4f6" strokeWidth="9" />
            </Icon></button>
            <button type="button" aria-label="Close drawing"><Icon w={16}><path d="M6 4L42 42M42 4L6 42" stroke="#f2f4f6" strokeWidth="11" /></Icon></button>
        </div>
        <span className="absolute top-[151px] left-[421px] font-['Liberation_Sans'] text-[65px] leading-[72px] text-white">371,46</span>
        <UcsIcon />
        <DynamicInput />
    </main>
}

/* ---------- command line ---------- */

function CommandLine() {
    return <div className="flex h-[102px] shrink-0">
        <div className="flex w-11 flex-col items-center bg-[#2e3542]">
            <span className="mt-[7px] w-[31px] border-t-[3px] border-dotted border-[#d6d9dd]" />
            <button type="button" aria-label="Close command line" className="mt-5 mr-1"><Icon w={17}><path d="M4 4L46 46M46 4L4 46" stroke={LIGHT} strokeWidth="11" /></Icon></button>
            <button type="button" aria-label="Customize" className="mt-5"><Icon w={27}>
                <path d="M8 72L46 32" stroke={LIGHT} strokeWidth="14" strokeLinecap="round" />
                <path d="M62 2Q42 0 38 18Q36 40 56 42Q76 42 80 22L64 28L54 20Z" fill={LIGHT} />
            </Icon></button>
        </div>
        <div className="flex flex-1 flex-col font-['Liberation_Mono'] text-[22px] text-black">
            <div className="h-16 bg-[#c8c8c8] pt-[8px] pl-[5px] leading-[27px]">
                <p>&gt;&gt;Enter new value for ORTHOMODE &lt;0&gt;:</p>
                <p>Resuming COPY command.</p>
            </div>
            <div className="mt-0.5 flex h-9 items-center bg-white pl-[7px] whitespace-pre">
                <Icon>
                    <circle cx="18" cy="18" r="15" stroke="#dcdcdc" strokeWidth="5" />
                    <circle cx="39" cy="66" r="15" stroke={BLUE} strokeWidth="5" />
                    <path d="M62 51A15 15 0 1 1 62 81" stroke={BLUE} strokeWidth="5" />
                </Icon>
                <Caret big fill="#5c5c5c" className="ml-1" />
                <b className="ml-[11px] pt-[2px]">COPY</b>
                <span className="ml-2 pt-[2px]">Specify second point or [</span>
                <button type="button" className="mt-[2px] h-7 rounded-[4px] bg-[#d0d3d8] text-[#1a1ae0]">Array</button>
                <span className="pt-[2px]">] &lt;use first point as displacement&gt;:</span>
                <input type="text" aria-label="Command" className="min-w-0 flex-1" />
            </div>
        </div>
    </div>
}

/* ---------- layout tabs and status bar ---------- */

function LayoutTabs() {
    return <div className="flex h-[42px] items-center pl-[14px]">
        <button type="button" className="flex h-full w-[121px] items-center bg-[#3c4453] pt-[3px] pl-[30px] text-[20px] font-bold text-white [clip-path:polygon(17px_0,100%_0,calc(100%-17px)_100%,0_100%)]">Model</button>
        <button type="button" className="ml-[13px] w-[87px] pt-1 text-left">Layout1</button>
        <Slash />
        <button type="button" className="ml-[13px] w-[87px] pt-1 text-left">Layout2</button>
        <Slash />
        <button type="button" aria-label="New layout" className="mr-[18px] ml-[16px]"><Plus /></button>
        <Slash />
    </div>
}

function Toggle(props: { name: string, on?: boolean, width?: string, children: ReactNode }) {
    const { name, on, width = 'w-[39px]', children } = props
    return <button type="button" aria-label={name} aria-pressed={on} className={`flex h-[39px] shrink-0 items-center justify-center ${width} ${on ? 'bg-[#5c8fc6]' : ''}`}>
        {children}
    </button>
}

function Group(props: { width: string, className?: string, children?: ReactNode }) {
    return <div className={`flex h-[42px] shrink-0 items-center bg-[#3c4452] ${props.width} ${props.className || ''}`}>{props.children}</div>
}

function Compass(props: { fill: string }) {
    return <path d="M37 0Q46 10 46 26Q48 34 54 42Q66 58 76 82Q60 80 50 68Q44 76 37 76Q30 76 24 68Q14 80 0 82Q8 58 20 42Q27 34 28 26Q28 10 37 0Z" fill={props.fill} />
}

function StatusBar() {
    return <div className="mr-[3px] flex pt-1">
        <Group width="w-[83px]" className="mr-[6px] justify-center pt-[2px] text-[20px] text-[#f0f2f4]">MODEL</Group>
        <Group width="w-28" className="mr-[6px] pl-px">
            <Toggle name="Grid" on><Icon w={26}>
                <path d="M17 0V78M39 0V78M61 0V78M0 17H78M0 39H78M0 61H78" stroke="#fff" strokeWidth="5" />
            </Icon></Toggle>
            <Toggle name="Snap" width="w-11"><Icon w={22}>
                <path d="M0 5H66M0 33H66M0 60H66" stroke={LIGHT} strokeWidth="11" strokeDasharray="11 16.500" />
            </Icon></Toggle>
            <Caret big className="ml-[6px]" />
        </Group>
        <Group width="w-[182px]" className="mr-[3px] pl-[7px]">
            <Toggle name="Ortho" width="w-7"><Icon>
                <path d="M3 0V81H84M3 56H27V81" stroke={LIGHT} strokeWidth="5" />
            </Icon></Toggle>
            <span className="w-2" />
            <Toggle name="Polar tracking" on><Icon>
                <path d="M52 12A32 32 0 1 0 65 52M70 6L36 44H84" stroke="#fff" strokeWidth="5" />
                <path d="M54 25Q62 34 64 43" stroke="#fff" strokeWidth="4" />
            </Icon></Toggle>
            <Caret big className="ml-2" />
            <Toggle name="Isometric" width="w-14"><Icon w={22} h={26}>
                <path d="M33 0V78" stroke={GREEN} strokeWidth="5" /><path d="M2 6L66 70" stroke="#e06a66" strokeWidth="5" />
                <path d="M26 32h14v14H26Z" fill={PANEL} stroke="#fff" strokeWidth="5" />
            </Icon></Toggle>
            <Caret big />
        </Group>
        <Group width="w-[42px]"><Toggle name="Object snap tracking" on><Icon>
            <path d="M84 69H6L60 8" stroke="#fff" strokeWidth="5" /><path d="M28 30h14v14H28Z" fill="#fff" />
        </Icon></Toggle></Group>
        <Group width="w-[69px]" className="mr-[6px]">
            <Toggle name="Object snap" on><Icon>
                <path d="M32 12H82V80H14V30" stroke="#fff" strokeWidth="5" /><path d="M3 3H26V26H3Z" stroke="#fff" strokeWidth="5" />
            </Icon></Toggle>
            <Caret big className="ml-[9px]" />
        </Group>
        <Group width="w-[184px]" className="mr-[6px] pl-px">
            <Toggle name="Annotation visibility" on><Icon>
                <Compass fill="#fff" /><circle cx="68" cy="20" r="18" fill="#5c8fc6" /><circle cx="68" cy="20" r="13" stroke="#fff" strokeWidth="5" />
            </Icon></Toggle>
            <Toggle name="Auto scale" width="w-[47px]"><Icon>
                <Compass fill={LIGHT} /><path d="M74 0L50 24H64L58 44L86 18H70Z" fill={LIGHT} stroke={PANEL} strokeWidth="3" />
            </Icon></Toggle>
            <Toggle name="Annotation scale" width="w-[34px]"><Icon><Compass fill={LIGHT} /></Icon></Toggle>
            <span className="ml-[11px] pt-[2px] text-[#f0f2f4]">1:1</span>
            <Caret big className="ml-auto mr-[7px]" />
        </Group>
        <Group width="w-[70px]" className="mr-[2px] pl-2">
            <Icon w={26}>
                <path d="M39 5V73M5 39H73M15 15L63 63M63 15L15 63" stroke={LIGHT} strokeWidth="16" />
                <circle cx="39" cy="39" r="22" fill="#4b525d" stroke={LIGHT} strokeWidth="16" />
            </Icon>
            <Caret big className="ml-[15px]" />
        </Group>
        <Group width="w-[42px]" className="mr-[6px] justify-center"><Icon><path d="M42 0V84M0 42H84" stroke={LIGHT} strokeWidth="7" /></Icon></Group>
        <Group width="w-[41px]" className="mr-[6px] justify-center"><Icon>
            <path d="M3 3H34V34H3ZM34 54L52 82H16Z" stroke={LIGHT} strokeWidth="5" /><circle cx="66" cy="35" r="15" stroke={LIGHT} strokeWidth="5" />
        </Icon></Group>
        <Group width="w-1" className="mr-[6px]" />
        <Group width="w-[84px]" className="justify-between px-[7px]">
            <Icon>
                <path d="M3 12H81V70H3Z" stroke={LIGHT} strokeWidth="5" />
                <path d="M72 20V40L52 20ZM10 62V42L30 62Z" fill={LIGHT} /><path d="M54 38L64 28M18 54L28 44" stroke={LIGHT} strokeWidth="5" />
            </Icon>
            <Icon><path d="M0 10H84M0 42H84M0 74H84" stroke={LIGHT} strokeWidth="6" /></Icon>
        </Group>
    </div>
}

export default function App() {
    return <div className="flex h-screen flex-col overflow-hidden border border-b-2 border-[#2a86a8] bg-[#222933] font-['Open_Sans',sans-serif] text-[19px] leading-[26px] text-[#e8eaed]">
        <TitleBar />
        <RibbonTabs />
        <div className="mr-1 ml-[5px] flex h-[173px] shrink-0 bg-[#3c4453]">
            <DrawPanel />
            <ModifyPanel />
            <AnnotationPanel />
            <LayersPanel />
            <BlockPanel />
            <PropertiesPanel />
            <GroupsPanel />
            <UtilitiesPanel />
            <ClipboardPanel />
        </div>
        <DocumentTabs />
        <div className="mr-[3px] ml-[3px] flex min-h-0 flex-1 flex-col">
            <div className="h-[7px] shrink-0 bg-[#3c4453]" />
            <Canvas />
            <div className="mb-0.5 h-[7px] shrink-0 bg-[#3c4453]" />
            <CommandLine />
            <div className="h-2 shrink-0 bg-[#3f4453]" />
            <footer className="flex h-[53px] shrink-0 items-start justify-between">
                <LayoutTabs />
                <StatusBar />
            </footer>
        </div>
    </div>
}
